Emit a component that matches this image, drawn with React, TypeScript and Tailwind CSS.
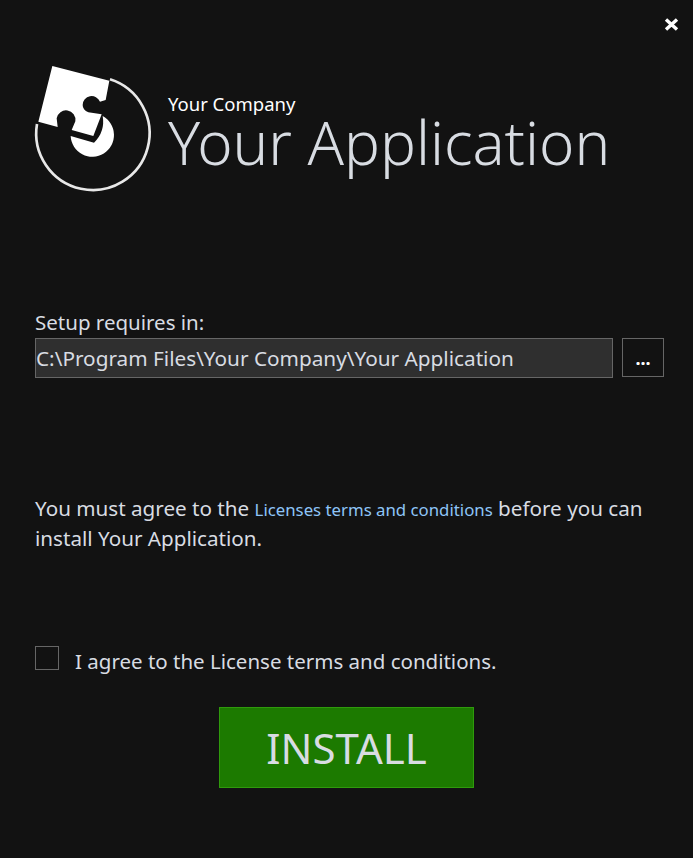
const FONT = "font-['Noto_Sans','Open_Sans',sans-serif]";

function Logo() {
  return (
    <svg viewBox="0 0 450 450" className="w-[150px] h-[150px] shrink-0">
      <path d="M270 88 A170 170 0 1 1 51 222" fill="none" stroke="#e8e8e8" strokeWidth="8" />
      <path
        fill="#ffffff"
        d="M97 48 L268 92 L257 150 L240 155 A27 27 0 0 0 188 165 Q188 180 205 187 L245 193 L220 258 L155 240 L166 214 A28 28 0 0 0 110 205 L113 231 L55 215 Z"
      />
      <path fill="#ffffff" d="M248 198 A65 65 0 1 1 152 258 L222 278 Q256 245 248 198 Z" />
    </svg>
  );
}

export default function App() {
  return (
    <div className={`w-[693px] h-[858px] bg-[#121212] text-[#d8dce2] overflow-hidden flex flex-col ${FONT}`}>
      <div className="flex justify-end pt-[18px] pr-[14px] h-[50px]">
        <svg viewBox="0 0 15 13" className="w-[15px] h-[13px]">
          <path d="M2 1.5 L13 11.5 M13 1.5 L2 11.5" stroke="#ffffff" strokeWidth="3.4" fill="none" />
        </svg>
      </div>

      <div className="flex items-start pl-[20px]">
        <Logo />
        <div className="-ml-[2px] pt-[43px] flex flex-col">
          <span className="text-[18.5px] leading-[22px] text-white">Your Company</span>
          <span className="text-[60px] leading-[54px] font-light whitespace-nowrap">Your Application</span>
        </div>
      </div>

      <div className="pl-[35px] pr-[29px] mt-[109px]">
        <div className="text-[20.5px] leading-[26px]">Setup requires in:</div>
        <div className="flex gap-[9px] mt-[3px]">
          <div className="w-[578px] h-[40px] bg-[#2f2f2f] border border-[#666666] flex items-center pt-[2px] text-[20.75px]">
            C:\Program Files\Your Company\Your Application
          </div>
          <button className="w-[42px] h-[39px] bg-[#121212] border border-[#666666] text-white text-[18px] font-bold leading-none">
            ...
          </button>
        </div>
      </div>

      <p className="pl-[35px] pr-[40px] mt-[116px] text-[20.65px] leading-[29px]">
        You must agree to the{' '}
        <span className="text-[16.8px] text-[#8ec5f7]">Licenses terms and conditions</span> before you can install Your
        Application.
      </p>

      <div className="flex items-center pl-[35px] mt-[92px]">
        <div className="w-[24px] h-[24px] border border-[#666666]" />
        <span className="ml-[16px] text-[20.5px] leading-[26px] relative top-[3px]">I agree to the License terms and conditions.</span>
      </div>

      <div className="flex pl-[219px] mt-[36px]">
        <button className="w-[255px] h-[81px] bg-[#1c7a00] border border-[#2f9a0c] text-[42px] text-[#d8dce2]">
          INSTALL
        </button>
      </div>
    </div>
  );
}
